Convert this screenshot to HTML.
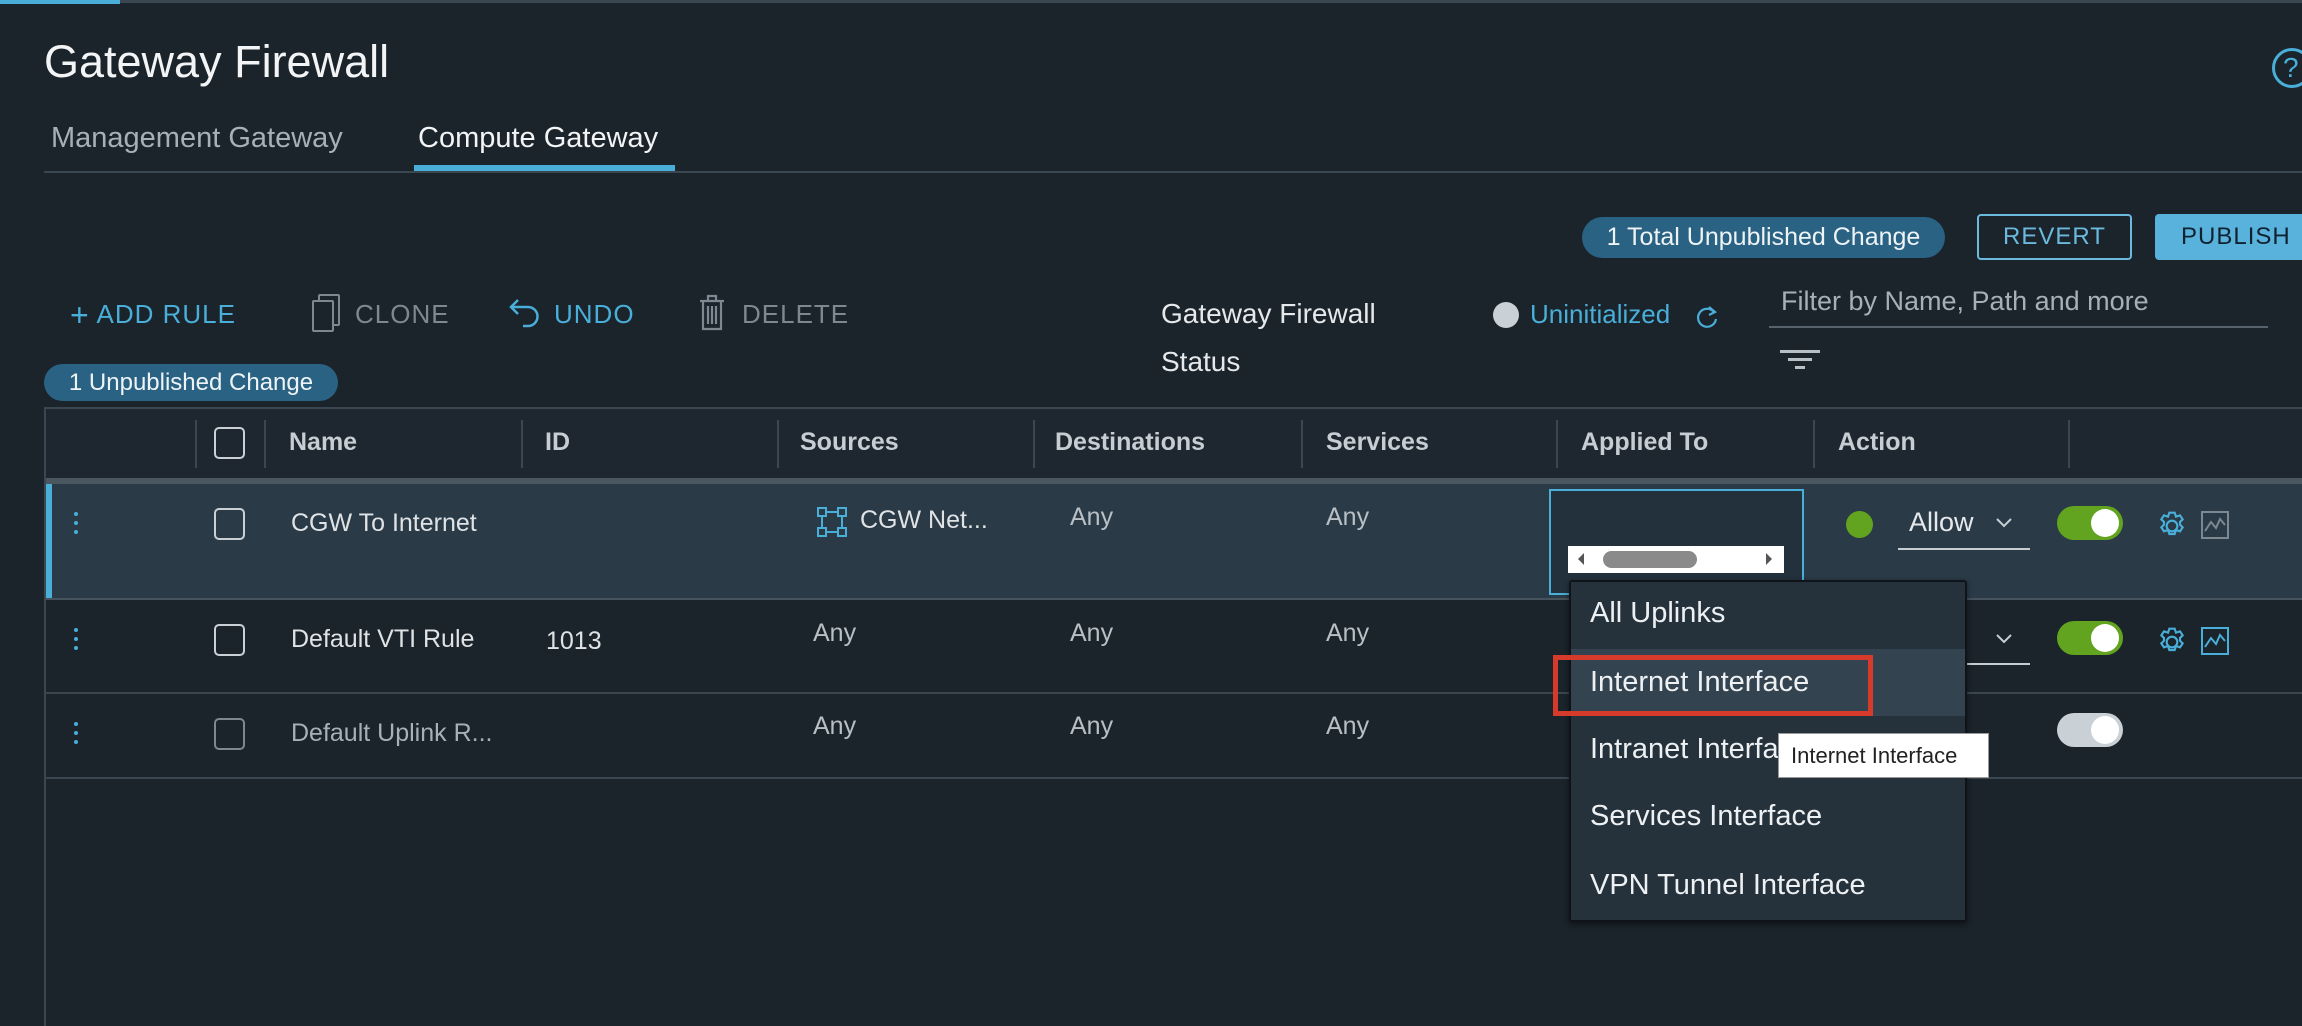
<!DOCTYPE html>
<html><head><meta charset="utf-8"><style>
*{margin:0;padding:0;box-sizing:border-box}
body{width:2302px;height:1026px;background:#1b232b;font-family:"Liberation Sans",sans-serif;color:#e6e9ec;position:relative;overflow:hidden}
.a{position:absolute;white-space:nowrap}
.vl{position:absolute;width:2px;background:#3a4650}
.hl{position:absolute;height:2px;background:#3a4650}
.cb{position:absolute;width:31px;height:32px;border:2px solid #c9d0d6;border-radius:5px}
.tg{position:absolute;width:66px;height:34px;border-radius:17px;background:#62a420}
.tg::after{content:"";position:absolute;right:4px;top:3px;width:28px;height:28px;border-radius:50%;background:#fff}
.kb{position:absolute;width:5px}
.kb i{display:block;width:4px;height:4px;background:#49afd9;border-radius:50%;margin-bottom:5px}
.txt{font-size:25px;color:#dfe3e6}
.hd{font-size:25px;color:#c7ced3;font-weight:bold}
.dd{font-size:29px;color:#eef1f3}
</style></head><body>
<div class="a" style="left:0;top:0;width:2302px;height:3px;background:#3a4650"></div>
<div class="a" style="left:0;top:0;width:120px;height:4px;background:#49afd9"></div>
<div class="a" style="left:44px;top:36px;font-size:45px;color:#f2f4f5">Gateway Firewall</div>
<div class="a" style="left:2272px;top:48px;width:40px;height:40px;border:3px solid #49afd9;border-radius:50%;color:#49afd9;font-size:28px;line-height:34px;padding-left:8px">?</div>
<div class="a" style="left:51px;top:122px;font-size:29px;color:#a7b0b7">Management Gateway</div>
<div class="a" style="left:418px;top:122px;font-size:29px;color:#f2f4f5">Compute Gateway</div>
<div class="hl" style="left:44px;top:171px;width:2258px"></div>
<div class="a" style="left:414px;top:165px;width:261px;height:6px;background:#49afd9"></div>

<div class="a" style="left:1582px;top:217px;width:363px;height:41px;border-radius:21px;background:#2a6283;font-size:25px;line-height:41px;text-align:center;color:#eef3f6">1 Total Unpublished Change</div>
<div class="a" style="left:1977px;top:214px;width:155px;height:46px;border:2px solid #6bb9dd;border-radius:4px;font-size:24px;line-height:42px;text-align:center;color:#6bb9dd;letter-spacing:1px">REVERT</div>
<div class="a" style="left:2155px;top:214px;width:160px;height:46px;border-radius:4px;background:#59b2dc;font-size:24px;line-height:46px;padding-left:26px;color:#0f2230;letter-spacing:1px">PUBLISH</div>

<div class="a" style="left:70px;top:297px;font-size:26px;color:#49afd9;letter-spacing:1px"><span style="font-size:32px;vertical-align:-3px">+</span> ADD RULE</div>
<div class="a" style="left:318px;top:294px;width:22px;height:32px;border:2px solid #7d8890;border-radius:2px"></div>
<div class="a" style="left:312px;top:300px;width:22px;height:32px;border:2px solid #7d8890;border-radius:2px;background:#1b232b"></div>
<div class="a" style="left:355px;top:299px;font-size:26px;color:#7d8890;letter-spacing:1px">CLONE</div>
<svg class="a" style="left:508px;top:296px" width="34" height="36" viewBox="0 0 34 36"><path d="M10 4 L3 11 L10 18 M3 11 H20 A9 9 0 0 1 20 30 H15" fill="none" stroke="#49afd9" stroke-width="2.5"/></svg>
<div class="a" style="left:554px;top:299px;font-size:26px;color:#49afd9;letter-spacing:1px">UNDO</div>
<svg class="a" style="left:697px;top:292px" width="30" height="40" viewBox="0 0 30 40"><path d="M3 9 H27 M11 9 V4 H19 V9 M6 9 V37 H24 V9 M11 14 V32 M15 14 V32 M19 14 V32" fill="none" stroke="#7d8890" stroke-width="2.2"/></svg>
<div class="a" style="left:742px;top:299px;font-size:26px;color:#7d8890;letter-spacing:1px">DELETE</div>

<div class="a" style="left:1161px;top:298px;font-size:28px;color:#e6e9ec">Gateway Firewall</div>
<div class="a" style="left:1161px;top:346px;font-size:28px;color:#e6e9ec">Status</div>
<div class="a" style="left:1493px;top:302px;width:26px;height:26px;border-radius:50%;background:#c9d0d6"></div>
<div class="a" style="left:1530px;top:299px;font-size:26px;color:#49afd9">Uninitialized</div>
<svg class="a" style="left:1694px;top:304px" width="26" height="28" viewBox="0 0 26 28"><path d="M20 8 A9 9 0 1 0 22 15" fill="none" stroke="#49afd9" stroke-width="2.2"/><path d="M15 3 L21 8 L15 11" fill="none" stroke="#49afd9" stroke-width="2.2"/></svg>
<div class="a" style="left:1781px;top:286px;font-size:27px;color:#a7b0b7">Filter by Name, Path and more</div>
<div class="hl" style="left:1769px;top:326px;width:499px;background:#56636d"></div>
<div class="a" style="left:1780px;top:350px;width:40px;height:3px;background:#b8c0c6"></div>
<div class="a" style="left:1788px;top:358px;width:24px;height:3px;background:#b8c0c6"></div>
<div class="a" style="left:1795px;top:366px;width:10px;height:3px;background:#b8c0c6"></div>

<div class="a" style="left:44px;top:364px;width:294px;height:37px;border-radius:19px;background:#2a6283;font-size:24px;line-height:37px;text-align:center;color:#eef3f6">1 Unpublished Change</div>

<div class="a" style="left:44px;top:407px;width:2258px;height:619px;border-left:2px solid #3a4650;border-top:2px solid #3a4650"></div>
<div class="a" style="left:46px;top:409px;width:2256px;height:69px;background:#1e272f"></div>
<div class="a" style="left:46px;top:478px;width:2256px;height:6px;background:#4a5660"></div>
<div class="vl" style="left:195px;top:420px;height:48px"></div>
<div class="vl" style="left:264px;top:420px;height:48px"></div>
<div class="vl" style="left:521px;top:420px;height:48px"></div>
<div class="vl" style="left:777px;top:420px;height:48px"></div>
<div class="vl" style="left:1033px;top:420px;height:48px"></div>
<div class="vl" style="left:1301px;top:420px;height:48px"></div>
<div class="vl" style="left:1556px;top:420px;height:48px"></div>
<div class="vl" style="left:1813px;top:420px;height:48px"></div>
<div class="vl" style="left:2068px;top:420px;height:48px"></div>
<div class="cb" style="left:214px;top:427px"></div>
<div class="a hd" style="left:289px;top:428px">Name</div>
<div class="a hd" style="left:545px;top:428px">ID</div>
<div class="a hd" style="left:800px;top:428px">Sources</div>
<div class="a hd" style="left:1055px;top:428px">Destinations</div>
<div class="a hd" style="left:1326px;top:428px">Services</div>
<div class="a hd" style="left:1581px;top:428px">Applied To</div>
<div class="a hd" style="left:1838px;top:428px">Action</div>

<div class="a" style="left:46px;top:484px;width:2256px;height:115px;background:#2a3a47"></div>
<div class="a" style="left:46px;top:484px;width:6px;height:115px;background:#49afd9"></div>
<div class="hl" style="left:46px;top:598px;width:2256px;background:#46525c"></div>
<div class="kb" style="left:74px;top:512px"><i></i><i></i><i></i></div>
<div class="cb" style="left:214px;top:508px"></div>
<div class="a txt" style="left:291px;top:509px">CGW To Internet</div>
<svg class="a" style="left:816px;top:506px" width="32" height="32" viewBox="0 0 32 32"><g fill="none" stroke="#49afd9" stroke-width="2"><rect x="2" y="2" width="8" height="8"/><rect x="22" y="2" width="8" height="8"/><rect x="2" y="22" width="8" height="8"/><rect x="22" y="22" width="8" height="8"/><path d="M10 6H22M10 26H22M6 10V22M26 10V22"/></g></svg>
<div class="a txt" style="left:860px;top:506px">CGW Net...</div>
<div class="a txt" style="left:1070px;top:503px;color:#b8c0c6">Any</div>
<div class="a txt" style="left:1326px;top:503px;color:#b8c0c6">Any</div>
<div class="a" style="left:1549px;top:489px;width:255px;height:106px;border:2px solid #49afd9;background:#23313c"></div>
<div class="a" style="left:1568px;top:546px;width:216px;height:27px;background:#fff"></div>
<div class="a" style="left:1603px;top:551px;width:94px;height:17px;border-radius:9px;background:#8a8a8a"></div>
<div class="a" style="left:1578px;top:553px;width:0;height:0;border-top:6px solid transparent;border-bottom:6px solid transparent;border-right:6px solid #555"></div>
<div class="a" style="left:1766px;top:553px;width:0;height:0;border-top:6px solid transparent;border-bottom:6px solid transparent;border-left:6px solid #555"></div>
<div class="a" style="left:1846px;top:511px;width:27px;height:27px;border-radius:50%;background:#62a420"></div>
<div class="a" style="left:1909px;top:507px;font-size:27px;color:#e6e9ec">Allow</div>
<svg class="a" style="left:1994px;top:516px" width="20" height="14"><path d="M3 3L10 10L17 3" fill="none" stroke="#c7ced3" stroke-width="2"/></svg>
<div class="hl" style="left:1898px;top:548px;width:132px;background:#c7ced3"></div>
<div class="tg" style="left:2057px;top:506px"></div>
<svg class="a" style="left:2156px;top:510px" width="32" height="32" viewBox="0 0 24 24"><path d="M12 8a4 4 0 1 0 0 8a4 4 0 1 0 0-8z M10 2h4l1 3 3-1 2 3-2 2v2l2 2-2 3-3-1-1 3h-4l-1-3-3 1-2-3 2-2v-2l-2-2 2-3 3 1z" fill="none" stroke="#49afd9" stroke-width="1.6"/></svg>
<svg class="a" style="left:2200px;top:510px" width="30" height="30" viewBox="0 0 30 30"><rect x="2" y="2" width="26" height="26" fill="none" stroke="#7d8890" stroke-width="2"/><path d="M5 21L11 12L16 18L20 9L25 15" fill="none" stroke="#7d8890" stroke-width="2"/></svg>

<div class="hl" style="left:46px;top:692px;width:2256px;background:#3a4650"></div>
<div class="kb" style="left:74px;top:628px"><i></i><i></i><i></i></div>
<div class="cb" style="left:214px;top:624px"></div>
<div class="a txt" style="left:291px;top:625px">Default VTI Rule</div>
<div class="a txt" style="left:546px;top:627px">1013</div>
<div class="a txt" style="left:813px;top:619px;color:#b8c0c6">Any</div>
<div class="a txt" style="left:1070px;top:619px;color:#b8c0c6">Any</div>
<div class="a txt" style="left:1326px;top:619px;color:#b8c0c6">Any</div>
<svg class="a" style="left:1994px;top:632px" width="20" height="14"><path d="M3 3L10 10L17 3" fill="none" stroke="#c7ced3" stroke-width="2"/></svg>
<div class="hl" style="left:1967px;top:663px;width:63px;background:#c7ced3"></div>
<div class="tg" style="left:2057px;top:621px"></div>
<svg class="a" style="left:2156px;top:626px" width="32" height="32" viewBox="0 0 24 24"><path d="M12 8a4 4 0 1 0 0 8a4 4 0 1 0 0-8z M10 2h4l1 3 3-1 2 3-2 2v2l2 2-2 3-3-1-1 3h-4l-1-3-3 1-2-3 2-2v-2l-2-2 2-3 3 1z" fill="none" stroke="#49afd9" stroke-width="1.6"/></svg>
<svg class="a" style="left:2200px;top:626px" width="30" height="30" viewBox="0 0 30 30"><rect x="2" y="2" width="26" height="26" fill="none" stroke="#49afd9" stroke-width="2"/><path d="M5 21L11 12L16 18L20 9L25 15" fill="none" stroke="#49afd9" stroke-width="2"/></svg>

<div class="hl" style="left:46px;top:777px;width:2256px;background:#3a4650"></div>
<div class="kb" style="left:74px;top:722px"><i></i><i></i><i></i></div>
<div class="cb" style="left:214px;top:718px;border-color:#7d8890"></div>
<div class="a txt" style="left:291px;top:719px;color:#a7b0b7">Default Uplink R...</div>
<div class="a txt" style="left:813px;top:712px;color:#b8c0c6">Any</div>
<div class="a txt" style="left:1070px;top:712px;color:#b8c0c6">Any</div>
<div class="a txt" style="left:1326px;top:712px;color:#b8c0c6">Any</div>
<div class="tg" style="left:2057px;top:713px;background:#c9d0d6"></div>

<div class="a" style="left:1569px;top:580px;width:398px;height:342px;background:#25323c;border:2px solid #0e1419;border-radius:3px;box-shadow:0 2px 6px rgba(0,0,0,.5)"></div>
<div class="a" style="left:1571px;top:649px;width:394px;height:67px;background:#33434f"></div>
<div class="a dd" style="left:1590px;top:597px">All Uplinks</div>
<div class="a dd" style="left:1590px;top:666px">Internet Interface</div>
<div class="a dd" style="left:1590px;top:733px">Intranet Interface</div>
<div class="a dd" style="left:1590px;top:800px">Services Interface</div>
<div class="a dd" style="left:1590px;top:869px">VPN Tunnel Interface</div>
<div class="a" style="left:1553px;top:655px;width:320px;height:61px;border:5px solid #d53a2a"></div>
<div class="a" style="left:1778px;top:733px;width:211px;height:45px;background:#fff;border:1px solid #999;font-size:22px;line-height:43px;color:#222;padding-left:12px">Internet Interface</div>
</body></html>
